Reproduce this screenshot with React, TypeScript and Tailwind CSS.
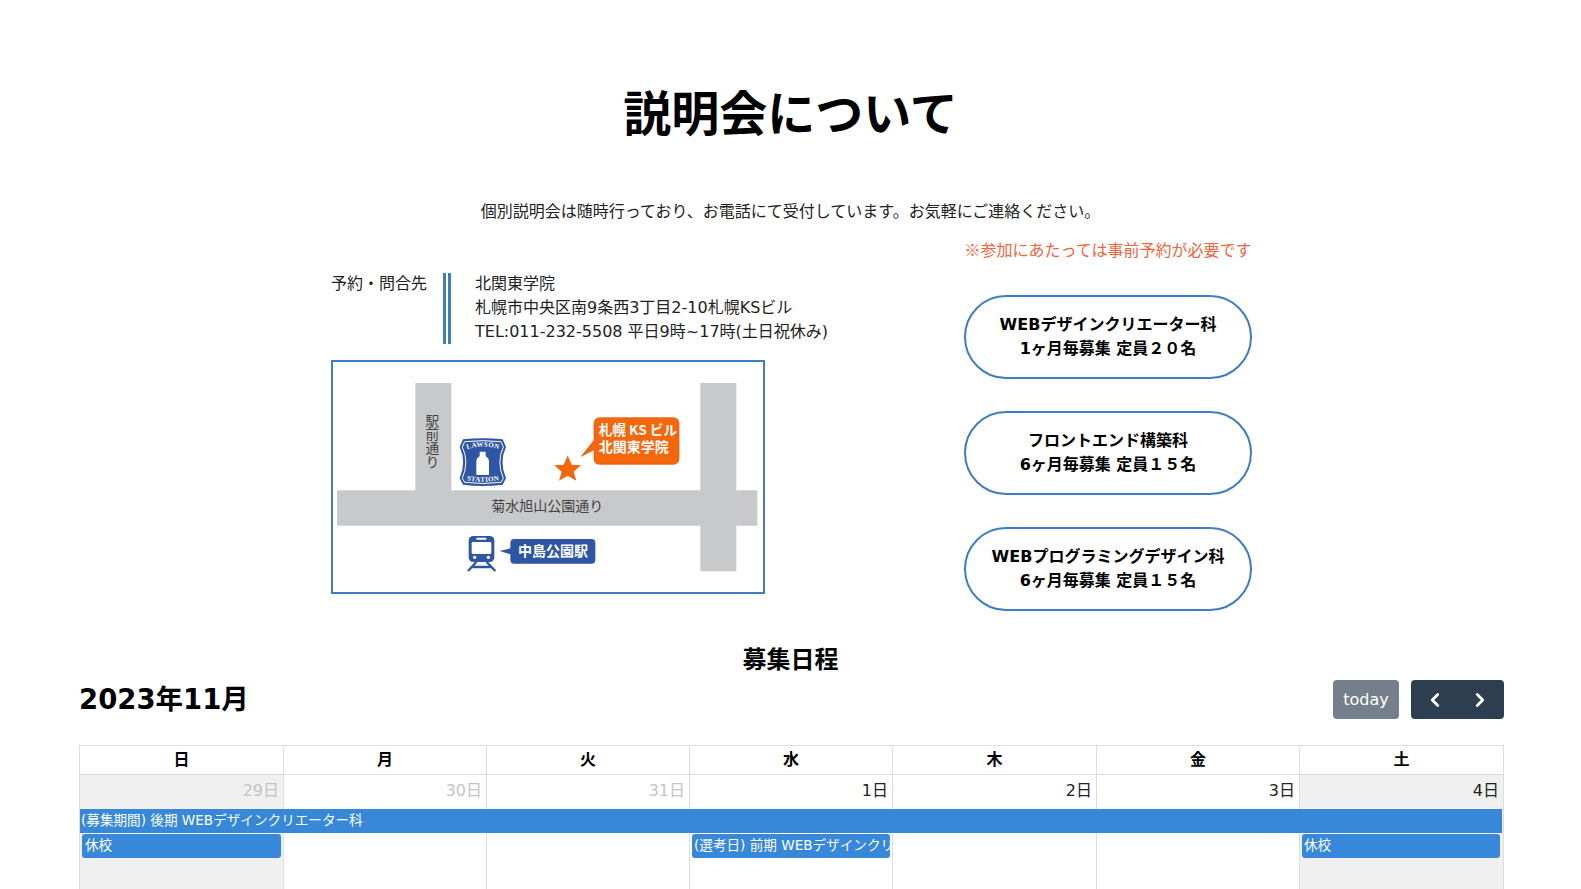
import { ChevronLeft, ChevronRight } from 'lucide-react';

const courses = [
  { name: 'WEBデザインクリエーター科', info: '1ヶ月毎募集 定員２０名' },
  { name: 'フロントエンド構築科', info: '6ヶ月毎募集 定員１５名' },
  { name: 'WEBプログラミングデザイン科', info: '6ヶ月毎募集 定員１５名' },
];

const weekdays = ['日', '月', '火', '水', '木', '金', '土'];

const days = [
  { label: '29日', muted: true, weekend: true, col: 'col-start-1' },
  { label: '30日', muted: true, weekend: false, col: 'col-start-2' },
  { label: '31日', muted: true, weekend: false, col: 'col-start-3' },
  { label: '1日', muted: false, weekend: false, col: 'col-start-4' },
  { label: '2日', muted: false, weekend: false, col: 'col-start-5' },
  { label: '3日', muted: false, weekend: false, col: 'col-start-6' },
  { label: '4日', muted: false, weekend: true, col: 'col-start-7' },
];

const MapDrawing = () => (
  <svg viewBox="38 35 1290 690" width="430" height="230" className="block">
    <rect x="285" y="98" width="108" height="330" fill="#c8c9ca" />
    <rect x="1140" y="98" width="108" height="565" fill="#c8c9ca" />
    <rect x="50" y="420" width="1261" height="106" fill="#c8c9ca" />

    <g fill="#444" fontSize="41" fontFamily="'Noto Sans CJK JP', sans-serif">
      <text x="336" y="190" writingMode="vertical-rl">駅前通り</text>
      <text x="681" y="481" textAnchor="middle" fontSize="42">菊水旭山公園通り</text>
    </g>

    {/* lawson sign */}
    <path d="M428 267 Q487 260 547 267 L557 290 Q536 335 557 384 L547 403 Q487 411 428 403 L418 384 Q439 335 418 290 Z" fill="#2f55a5" />
    <path d="M433 274 Q487 268 542 274 L549 290 Q528 335 549 384 L542 396 Q487 403 433 396 L426 384 Q447 335 426 290 Z" fill="none" stroke="#fff" strokeWidth="3" />
    <path d="M478 304 H496 V318 Q506 324 506 334 V374 H468 V334 Q468 324 478 318 Z" fill="#fff" />
    <path id="lawson-top" d="M434 299 Q487 279 542 299" fill="none" />
    <path id="lawson-bottom" d="M434 389 Q487 399 542 389" fill="none" />
    <text fontSize="21" fill="#fff" fontFamily="'Liberation Serif', serif" fontWeight="700" letterSpacing="1">
      <textPath href="#lawson-top" startOffset="50%" textAnchor="middle">LAWSON</textPath>
    </text>
    <text fontSize="21" fill="#fff" fontFamily="'Liberation Serif', serif" fontWeight="700" letterSpacing="1">
      <textPath href="#lawson-bottom" startOffset="50%" textAnchor="middle">STATION</textPath>
    </text>

    <polygon points="742,315 754,343 782,345 760,364 768,391 742,376 716,391 724,364 702,345 730,343" fill="#f2660f" />

    {/* building bubble */}
    <path d="M838 202 H1058 Q1076 202 1076 220 V324 Q1076 342 1058 342 H838 Q821 342 821 324 V298 L783 318 L821 270 V220 Q821 202 838 202 Z" fill="#f4670c" stroke="#d9560a" strokeWidth="2" />
    <g fill="#fff" fontWeight="700" fontFamily="'Noto Sans CJK JP', sans-serif">
      <text x="835" y="254" fontSize="41">札幌 KS ビル</text>
      <text x="835" y="305" fontSize="42">北関東学院</text>
    </g>

    {/* train */}
    <rect x="445" y="557" width="77" height="78" rx="14" fill="#2f55a5" />
    <rect x="454" y="575" width="59" height="36" rx="4" fill="#fff" />
    <rect x="468" y="562" width="30" height="6" rx="2" fill="#fff" />
    <circle cx="463" cy="621" r="5" fill="#fff" />
    <circle cx="504" cy="621" r="5" fill="#fff" />
    <path d="M468 635 L443 662 M499 635 L525 662 M457 650 H511" stroke="#2f55a5" strokeWidth="7" fill="none" />

    <path d="M582 566 H813 Q825 566 825 578 V628 Q825 640 813 640 H582 Q570 640 570 628 V612 L538 602 L570 594 V578 Q570 566 582 566 Z" fill="#2f55a5" />
    <text x="698" y="618" fontSize="42" fontWeight="700" fill="#fff" textAnchor="middle" fontFamily="'Noto Sans CJK JP', sans-serif">中島公園駅</text>
  </svg>
);

export default function App() {
  return (
    <div className="bg-white text-black font-['DejaVu_Sans','Noto_Sans_CJK_JP',sans-serif] text-[16px] leading-6">
      <h1 className="pt-[79px] text-center text-[48px] leading-[70px] font-bold">説明会について</h1>

      <p className="mt-[51px] text-center text-[#222]">個別説明会は随時行っており、お電話にて受付しています。お気軽にご連絡ください。</p>

      <div className="ml-[331px] mt-[15px] flex w-[921px] justify-between">
        <div className="w-[434px] pt-[33px]">
          <div className="flex text-[#222]">
            <div className="w-[112px] shrink-0">予約・問合先</div>
            <div className="mt-px w-[32px] shrink-0 border-l-[8px] border-double border-[#3f7cc0]" />
            <div>
              <div>北関東学院</div>
              <div>札幌市中央区南9条西3丁目2-10札幌KSビル</div>
              <div className="whitespace-nowrap">TEL:011-232-5508 平日9時~17時(土日祝休み)</div>
            </div>
          </div>
          <div className="mt-[16px] h-[234px] w-[434px] border-2 border-[#3f7cc0]">
            <MapDrawing />
          </div>
        </div>

        <div className="w-[288px]">
          <p className="-mt-[2px] text-center font-['Noto_Sans_CJK_JP',sans-serif] text-[#f0643c]">※参加にあたっては事前予約が必要です</p>
          <div className="mt-[34px] flex flex-col gap-[32px]">
            {courses.map(course => (
              <div
                key={course.name}
                className="flex h-[84px] flex-col items-center justify-center rounded-full border-2 border-[#3f7cc0] font-bold"
              >
                <div className="whitespace-nowrap">{course.name}</div>
                <div className="whitespace-nowrap">{course.info}</div>
              </div>
            ))}
          </div>
        </div>
      </div>

      <h2 className="mt-[31px] text-center text-[24px] leading-9 font-bold">募集日程</h2>

      <div className="mx-[79px] w-[1425px]">
        <div className="mt-[2px] flex items-start justify-between">
          <div className="-mt-px text-[27.5px] leading-10 font-bold">2023年11月</div>
          <div className="flex gap-3">
            <button className="h-[39px] w-[66px] rounded bg-[#757f8b] text-[16px] text-white">today</button>
            <div className="flex h-[39px] w-[93px] items-center justify-between rounded bg-[#2c3e50] px-[13px] text-white">
              <ChevronLeft size={22} strokeWidth={3} />
              <ChevronRight size={22} strokeWidth={3} />
            </div>
          </div>
        </div>

        <div className="mt-[26px] grid grid-cols-[204px_203px_203px_203px_204px_203px_204px] border-t border-l border-[#ddd]">
          {weekdays.map(day => (
            <div key={day} className="h-[29px] border-r border-b border-[#ddd] text-center leading-[28px] font-bold">
              {day}
            </div>
          ))}
        </div>

        <div className="grid grid-cols-[204px_203px_203px_203px_204px_203px_204px] grid-rows-[34px_25px_25px_120px] border-l border-[#ddd] text-[13.6px] leading-[22px] text-white">
          {days.map(day => (
            <div
              key={day.label}
              className={`${day.col} row-start-1 row-span-4 border-r border-b border-[#ddd] pt-[4px] pr-1 text-right text-[16px] leading-6 ${
                day.weekend ? 'bg-[#f0f0f0]' : 'bg-white'
              } ${day.muted ? 'text-[#c4c4c4]' : 'text-[#222]'}`}
            >
              {day.label}
            </div>
          ))}
          <div className="col-start-1 col-span-7 row-start-2 mr-[2px] h-6 overflow-hidden bg-[#3788d8] px-px">
            (募集期間) 後期 WEBデザインクリエーター科
          </div>
          <div className="col-start-1 row-start-3 ml-[2px] mr-[3px] h-6 rounded-[3px] bg-[#3788d8] px-[3px]">休校</div>
          <div className="col-start-4 row-start-3 ml-[2px] mr-[3px] h-6 overflow-hidden whitespace-nowrap rounded-[3px] bg-[#3788d8] px-[2px]">
            (選考日) 前期 WEBデザインクリエーター科
          </div>
          <div className="col-start-7 row-start-3 ml-[2px] mr-[4px] h-6 rounded-[3px] bg-[#3788d8] px-[2px]">休校</div>
        </div>
      </div>
    </div>
  );
}
